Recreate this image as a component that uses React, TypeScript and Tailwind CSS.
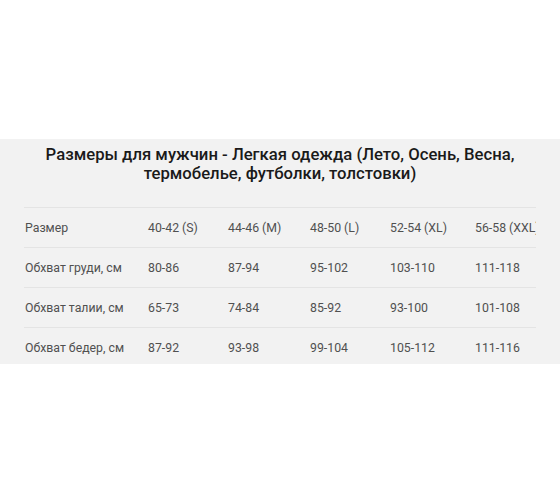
const rows = [
  { label: "Размер", values: ["40-42 (S)", "44-46 (M)", "48-50 (L)", "52-54 (XL)", "56-58 (XXL)"] },
  { label: "Обхват груди, см", values: ["80-86", "87-94", "95-102", "103-110", "111-118"] },
  { label: "Обхват талии, см", values: ["65-73", "74-84", "85-92", "93-100", "101-108"] },
  { label: "Обхват бедер, см", values: ["87-92", "93-98", "99-104", "105-112", "111-116"] },
];

const colWidths = ["w-[80px]", "w-[82px]", "w-[80px]", "w-[85px]", "w-[90px]"];

export default function App() {
  return (
    <div className="h-[504px] w-[560px] bg-white font-['Roboto',sans-serif]">
      <div className="h-[139px]" />
      <section className="h-[225px] bg-[#f2f2f2] pt-[6px]">
        <h2 className="mx-auto w-[520px] text-center text-[16.7px] font-medium leading-[19px] text-[#1a1a1a]">
          Размеры для мужчин - Легкая одежда (Лето, Осень, Весна, термобелье, футболки, толстовки)
        </h2>
        <div className="mx-6 mt-[24px] overflow-hidden">
          {rows.map((row) => (
            <div
              key={row.label}
              className="flex h-10 items-center whitespace-nowrap border-t border-[#e4e4e4] pt-[2px] text-[12.3px] text-[#505050]"
            >
              <div className="w-[124px] shrink-0 pl-px">{row.label}</div>
              {row.values.map((v, i) => (
                <div key={v} className={`${colWidths[i]} shrink-0`}>
                  {v}
                </div>
              ))}
            </div>
          ))}
        </div>
      </section>
    </div>
  );
}
